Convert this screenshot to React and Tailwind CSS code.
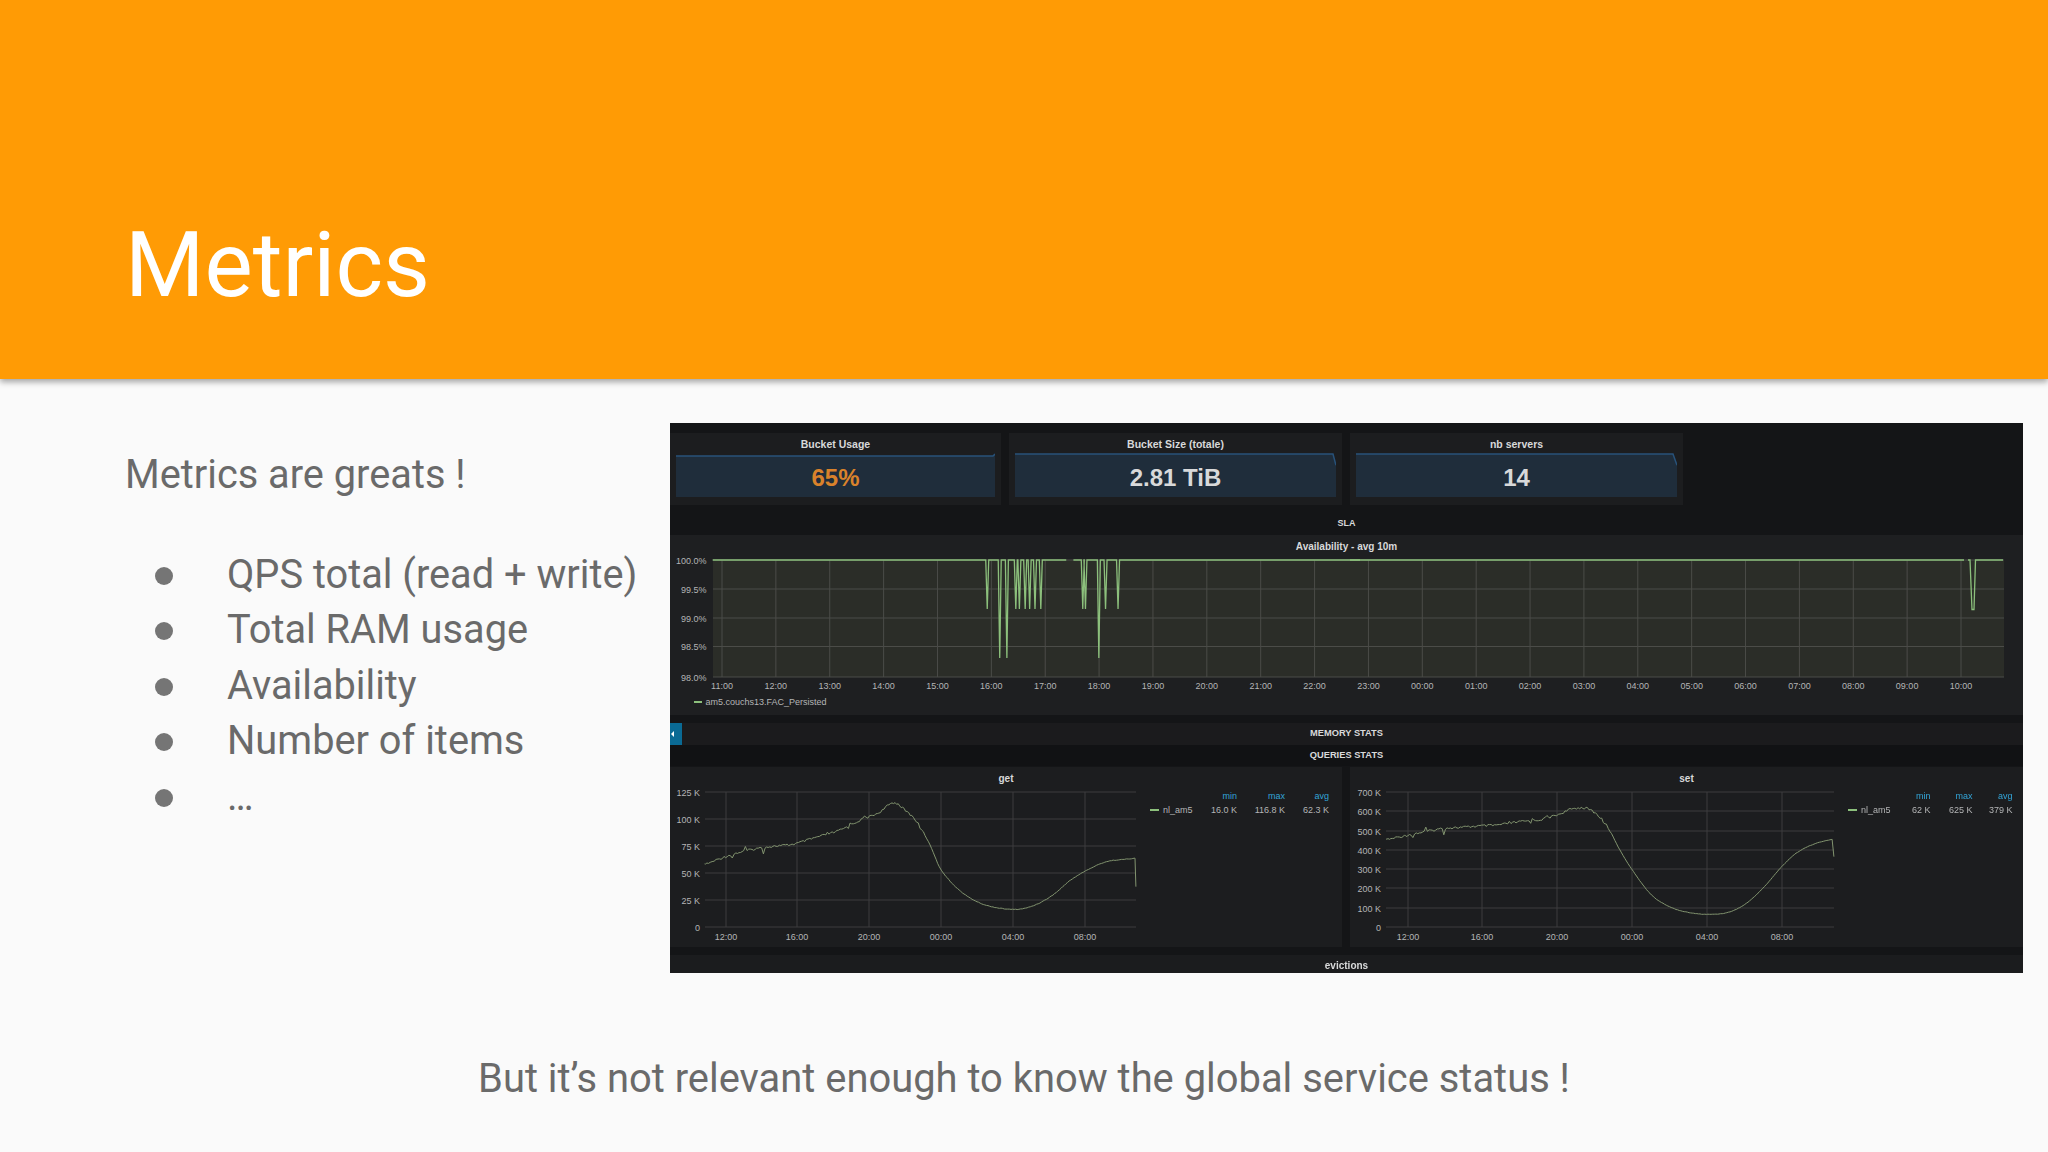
import React from "react";

const SANS = "font-['Liberation_Sans',Arial,sans-serif]";

const hours = ["11:00","12:00","13:00","14:00","15:00","16:00","17:00","18:00","19:00","20:00","21:00","22:00","23:00","00:00","01:00","02:00","03:00","04:00","05:00","06:00","07:00","08:00","09:00","10:00"];

function noise(i) {
  const s = Math.sin(i * 12.9898) * 43758.5453;
  return (s - Math.floor(s)) * 2 - 1;
}

function cr(a, b, c, d, t) {
  return 0.5 * (2 * b + (c - a) * t + (2 * a - 5 * b + 4 * c - d) * t * t + (3 * b - a - 3 * c + d) * t * t * t);
}

function jagged(points, ampLeft, ampRight, split) {
  const out = [];
  let k = 0;
  const last = points.length - 1;
  for (let i = 0; i < last; i++) {
    const p1 = points[i];
    const p2 = points[i + 1];
    const p0 = points[i - 1] || p1;
    const p3 = i + 2 < last ? points[i + 2] : p2;
    const isDrop = i === last - 1;
    const n = Math.max(1, Math.round(Math.abs(p2[0] - p1[0]) / 1.6));
    for (let j = 0; j < n; j++) {
      const t = j / n;
      const x = isDrop ? p1[0] + (p2[0] - p1[0]) * t : cr(p0[0], p1[0], p2[0], p3[0], t);
      const y = isDrop ? p1[1] + (p2[1] - p1[1]) * t : cr(p0[1], p1[1], p2[1], p3[1], t);
      const amp = x < split ? ampLeft : ampRight;
      const spike = x < split && noise(k * 7 + 3) > 0.9 ? noise(k * 3 + 1) * 6 : 0;
      out.push(`${x.toFixed(1)},${(y + noise(k++) * amp + spike).toFixed(1)}`);
    }
  }
  out.push(`${points[last][0]},${points[last][1]}`);
  return out.join(" ");
}

const getCurve = [[100,435],[130,418],[170,400],[220,385],[260,378],[300,372],[350,352],[400,332],[450,300],[490,278],[523,248],[550,272],[575,305],[605,375],[630,450],[670,510],[710,545],[750,562],[800,568],[840,555],[880,525],[920,480],[960,448],[1000,425],[1040,418],[1064,415],[1066,500]]
  .map(([x, y]) => [660 + x / 2.24, 720 + y / 3]);
const setCurve = [[102,360],[150,345],[190,335],[230,325],[270,322],[310,318],[350,315],[400,305],[440,300],[480,285],[520,265],[555,270],[590,315],[620,390],[650,455],[690,525],[730,560],[770,577],[815,583],[860,577],[900,550],[940,500],[975,445],[1010,400],[1050,372],[1090,358],[1094,410]]
  .map(([x, y]) => [1340 + x / 2.215, 720 + y / 3]);

function StatPanel({ title, value, valueClass, width, fill, line }) {
  return (
    <div className="flex h-[72px] flex-col bg-[#1c1d1f] px-[6px]" style={{ width }}>
      <div className="h-[19px] pt-[4px] text-center text-[10.5px] leading-[14px] font-bold text-[#d8d9da]">{title}</div>
      <div className="relative h-[45px] w-full">
        <svg viewBox="0 0 320 44" preserveAspectRatio="none" className="h-full w-full">
          <polygon points={fill} fill="#1f2d3b" />
          <polyline points={line} fill="none" stroke="#28527a" strokeWidth="1.5" />
        </svg>
        <div className={`absolute inset-0 flex items-center justify-center pt-[6px] text-[24px] leading-none font-bold ${valueClass}`}>{value}</div>
      </div>
    </div>
  );
}

function AvailabilityChart() {
  const yTicks = [[560,"100.0%"],[589,"99.5%"],[618,"99.0%"],[646.5,"98.5%"],[677,"98.0%"]];
  const low = 609, deep = 658;
  const zx = (h) => 660 + h / 2.24;
  const spikes = [[733,low],[761,deep],[777,deep],[797,low],[805,low],[818,low],[828,low],[840,low],[853,low]];
  const spikes2 = [[947,low],[953,low],[983,deep],[998,low],[1026,low]];
  const spikePath = (list, start, end) => {
    let d = `M${zx(start)} 560`;
    list.forEach(([h, y]) => {
      d += ` L${zx(h) - 1.5} 560 L${zx(h)} ${y} L${zx(h) + 1.5} 560`;
    });
    d += ` L${zx(end)} 560`;
    return d;
  };
  return (
    <svg viewBox="670 557 1353 158" className="h-[158px] w-full">
      <rect x="713" y="560" width="1291" height="117" fill="#2b2d28" />
      {yTicks.map(([y, t]) => (
        <g key={t}>
          <line x1="713" x2="2004" y1={y} y2={y} stroke="#4b4c48" strokeWidth="1" />
          <text x="706.5" y={y + 3.5} textAnchor="end" fontSize="9" fill="#b4b5b6">{t}</text>
        </g>
      ))}
      {hours.map((t, i) => {
        const x = 722 + i * 53.87;
        return (
          <g key={t}>
            <line x1={x} x2={x} y1="560" y2="677" stroke="#4b4c48" strokeWidth="1" />
            <text x={x} y="689" textAnchor="middle" fontSize="9" fill="#b4b5b6">{t}</text>
          </g>
        );
      })}
      <path d={spikePath(spikes, 118, 910)} fill="none" stroke="#8cc07c" strokeWidth="1.3" />
      <path d={spikePath(spikes2, 926, 1568)} fill="none" stroke="#8cc07c" strokeWidth="1.3" />
      <path d="M1350 560 L1964 560 M1968 560 L1970 560 L1972 609.5 L1974 609.5 L1975.5 560 L2003 560" fill="none" stroke="#8cc07c" strokeWidth="1.3" />
      <line x1="694" x2="702" y1="702" y2="702" stroke="#8cc07c" strokeWidth="2" />
      <text x="705.5" y="705" fontSize="9" fill="#b4b5b6">am5.couchs13.FAC_Persisted</text>
    </svg>
  );
}

function TimeChart({ viewBox, width, plot, yTicks, xTicks, labelX, curve }) {
  return (
    <svg viewBox={viewBox} className="h-[160px] shrink-0 overflow-visible" style={{ width }}>
      {yTicks.map(([y, t]) => (
        <g key={t}>
          <line x1={plot[0]} x2={plot[1]} y1={y} y2={y} stroke="#3c3d3f" strokeWidth="1" />
          <text x={labelX} y={y + 3.5} textAnchor="end" fontSize="9" fill="#b4b5b6">{t}</text>
        </g>
      ))}
      {xTicks.map(([x, t]) => (
        <g key={t}>
          <line x1={x} x2={x} y1="792" y2="927" stroke="#3c3d3f" strokeWidth="1" />
          <text x={x} y="940" textAnchor="middle" fontSize="9" fill="#b4b5b6">{t}</text>
        </g>
      ))}
      <polyline points={curve} fill="none" stroke="#82946f" strokeWidth="1" />
    </svg>
  );
}

function Legend({ cols, min, max, avg }) {
  return (
    <div className={`grid flex-1 content-start pt-[2px] pr-[13px] text-[9px] leading-[14px] ${cols}`}>
      <div />
      <div className="text-right text-[#33a5d8]">min</div>
      <div className="text-right text-[#33a5d8]">max</div>
      <div className="text-right text-[#33a5d8]">avg</div>
      <div className="flex items-center gap-[4px] text-[#b4b5b6]">
        <span className="h-[2px] w-[9px] bg-[#8cc07c]" />
        nl_am5
      </div>
      <div className="text-right text-[#b4b5b6]">{min}</div>
      <div className="text-right text-[#b4b5b6]">{max}</div>
      <div className="text-right text-[#b4b5b6]">{avg}</div>
    </div>
  );
}

function Dashboard() {
  return (
    <div className={`flex h-[550px] w-[1353px] shrink-0 flex-col bg-[#141517] ${SANS} blur-[0.4px]`}>
      <div className="flex gap-[8px] pt-[10px]">
        <StatPanel title="Bucket Usage" value="65%" valueClass="text-[#d9822b]" width={331}
          fill="0,4 318,4 320,2 320,44 0,44" line="0,4 318,4 320,2" />
        <StatPanel title="Bucket Size (totale)" value="2.81 TiB" valueClass="text-[#d8d9da]" width={333}
          fill="0,2 317,2 320,13 320,44 0,44" line="0,2 317,2 320,13" />
        <StatPanel title="nb servers" value="14" valueClass="text-[#d8d9da]" width={333}
          fill="0,2 316,2 320,13 320,44 0,44" line="0,2 316,2 320,13" />
      </div>
      <div className="flex h-[30px] items-center justify-center pt-[7px] text-[9px] font-bold text-[#d8d9da]">SLA</div>
      <div className="flex h-[180px] flex-col bg-[#1e1f21]">
        <div className="h-[22px] text-center text-[10px] leading-[23px] font-bold text-[#d8d9da]">Availability - avg 10m</div>
        <AvailabilityChart />
      </div>
      <div className="relative mt-[8px] flex h-[22px] items-center justify-center bg-[#1b1b1d] text-[9.3px] font-bold text-[#d8d9da]">
        <div className="absolute top-0 left-0 flex h-full w-[12px] items-center bg-[#0a6a94]">
          <span className="ml-[1px] h-0 w-0 border-y-[3px] border-r-[3px] border-y-transparent border-r-white" />
        </div>
        MEMORY STATS
      </div>
      <div className="flex h-[21px] items-center justify-center bg-[#111214] text-[9.3px] font-bold text-[#d8d9da]">QUERIES STATS</div>
      <div className="mt-[1px] flex h-[180px] gap-[8px]">
        <div className="flex w-[672px] flex-col bg-[#1c1d1f]">
          <div className="h-[20px] text-center text-[10px] leading-[24px] font-bold text-[#d8d9da]">get</div>
          <div className="flex">
            <TimeChart viewBox="670 787 470 160" width={470} plot={[705, 1136]} labelX={700}
              yTicks={[[792,"125 K"],[819,"100 K"],[846,"75 K"],[873,"50 K"],[900,"25 K"],[927,"0"]]}
              xTicks={[[726,"12:00"],[797,"16:00"],[869,"20:00"],[941,"00:00"],[1013,"04:00"],[1085,"08:00"]]}
              curve={jagged(getCurve, 1.1, 0.25, 925)} />
            <Legend cols="ml-[10px] grid-cols-[1fr_44px_48px_44px]" min="16.0 K" max="116.8 K" avg="62.3 K" />
          </div>
        </div>
        <div className="flex w-[673px] flex-col bg-[#1c1d1f]">
          <div className="h-[20px] text-center text-[10px] leading-[24px] font-bold text-[#d8d9da]">set</div>
          <div className="flex">
            <TimeChart viewBox="1350 787 490 160" width={490} plot={[1386, 1834]} labelX={1381}
              yTicks={[[792,"700 K"],[811,"600 K"],[831,"500 K"],[850,"400 K"],[869,"300 K"],[888,"200 K"],[908,"100 K"],[927,"0"]]}
              xTicks={[[1408,"12:00"],[1482,"16:00"],[1557,"20:00"],[1632,"00:00"],[1707,"04:00"],[1782,"08:00"]]}
              curve={jagged(setCurve, 1.2, 0.15, 1610)} />
            <Legend cols="ml-[8px] grid-cols-[1fr_40px_42px_40px]" min="62 K" max="625 K" avg="379 K" />
          </div>
        </div>
      </div>
      <div className="mt-[8px] flex h-[18px] items-center justify-center pt-[2px] text-[10px] font-bold bg-[#1b1c1e] text-[#d8d9da]">evictions</div>
    </div>
  );
}

const items = ["QPS total (read + write)", "Total RAM usage", "Availability", "Number of items", "…"];

export default function App() {
  return (
    <div className="flex h-[1152px] w-[2048px] flex-col overflow-hidden bg-[#fafafa] font-['Roboto',sans-serif]">
      <header className="relative z-10 flex h-[379px] shrink-0 items-end bg-[#ff9b05] pb-[64px] pl-[125px] shadow-[0_3px_6px_rgba(0,0,0,0.35)]">
        <h1 className="text-[91px] leading-[100px] font-normal text-white">Metrics</h1>
      </header>
      <main className="flex pt-[44px]">
        <div className="w-[670px] shrink-0 pt-[28px] pl-[125px] text-[39.75px] text-[#6a6a6a]">
          <p className="leading-[48px]">Metrics are greats !</p>
          <ul className="mt-[48px]">
            {items.map((t) => (
              <li key={t} className="flex h-[55.5px] items-center whitespace-nowrap">
                <span className="mt-[2px] ml-[30px] h-[18px] w-[18px] shrink-0 rounded-full bg-[#757575]" />
                <span className="ml-[54px]">{t}</span>
              </li>
            ))}
          </ul>
        </div>
        <Dashboard />
      </main>
      <p className="mt-[82px] text-center text-[39.9px] leading-[48px] text-[#6a6a6a]">But it’s not relevant enough to know the global service status !</p>
    </div>
  );
}
